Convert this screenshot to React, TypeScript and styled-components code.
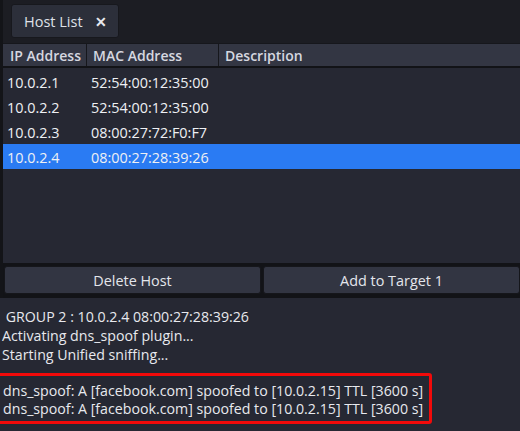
import React from "react";
import styled, { createGlobalStyle } from "styled-components";

const Global = createGlobalStyle`
  html, body { margin: 0; padding: 0; background: #262833; }
  body { font-family: "Open Sans", "Noto Sans", sans-serif; }
`;

const Window = styled.div`
  width: 520px;
  height: 431px;
  display: flex;
  flex-direction: column;
  background: #262833;
  overflow: hidden;
`;

const TabBar = styled.div`
  height: 43px;
  box-sizing: border-box;
  background: #1c1d23;
  border-left: 3px solid #131418;
  padding: 4px 0 0 8px;
  display: flex;
  align-items: flex-start;
`;

const Tab = styled.div`
  height: 34px;
  width: 108px;
  box-sizing: border-box;
  background: #2c2f3a;
  border-radius: 3px;
  border: 1px solid #17181d;
  display: flex;
  align-items: center;
  padding-left: 12px;
  gap: 12px;
  color: #dfe1e8;
  font-size: 14.5px;
`;

const Close = styled.span`
  font-size: 14px;
  font-weight: 700;
  color: #e8e9ee;
`;

const Panel = styled.div`
  height: 255px;
  display: flex;
  flex-direction: column;
  border-left: 3px solid #131418;
  background: #262833;
`;

const HeaderRow = styled.div`
  display: grid;
  grid-template-columns: 83px 132px 1fr;
  height: 25px;
  box-sizing: border-box;
  border-top: 1px solid #16171c;
  border-bottom: 2px solid #121317;
  background: #333643;
`;

const HeaderCell = styled.div<{ $first?: boolean }>`
  display: flex;
  align-items: center;
  padding-left: ${(p) => (p.$first ? "7px" : "6px")};
  border-left: ${(p) => (p.$first ? "none" : "1px solid #16171c")};
  color: #d6d8e0;
  font-size: 14px;
  font-weight: 600;
  white-space: nowrap;
  overflow: hidden;
`;

const Body = styled.div`
  padding-top: 1px;
`;

const Row = styled.div<{ $selected?: boolean }>`
  display: grid;
  grid-template-columns: 83px 132px 1fr;
  height: 25px;
  align-items: center;
  background: ${(p) => (p.$selected ? "#2a7bf3" : "transparent")};
  color: #eef0f4;
  font-size: 14.4px;
`;

const Cell = styled.div<{ $first?: boolean }>`
  padding-left: ${(p) => (p.$first ? "4px" : "5px")};
  padding-top: 1px;
  white-space: nowrap;
`;

const Spacer = styled.div`
  flex: 1;
`;

const ButtonRow = styled.div`
  display: flex;
  gap: 2px;
  padding: 2px 0 4px 1px;
  border-top: 1px solid #121317;
  background: #121317;
`;

const Button = styled.div`
  flex: 1;
  height: 28px;
  box-sizing: border-box;
  background: #323542;
  border: 1px solid #15161b;
  border-radius: 3px;
  display: flex;
  align-items: center;
  justify-content: center;
  color: #e4e6ec;
  font-size: 14.4px;
`;

const Log = styled.div`
  flex: 1;
  padding: 9px 0 0 2px;
  color: #e8e9ee;
  font-size: 14.2px;
  line-height: 19px;
  background: #262833;
`;

const LogLine = styled.div`
  white-space: nowrap;
`;

const Highlight = styled.div`
  margin: 9px 0 0 -6px;
  width: 436px;
  box-sizing: border-box;
  border: 3px solid #f20a0a;
  border-radius: 3px;
  padding: 6px 0 3px 4px;
  line-height: 18px;
`;

const hosts = [
  ["10.0.2.1", "52:54:00:12:35:00"],
  ["10.0.2.2", "52:54:00:12:35:00"],
  ["10.0.2.3", "08:00:27:72:F0:F7"],
  ["10.0.2.4", "08:00:27:28:39:26"],
];

export default function App() {
  return (
    <Window>
      <Global />
      <TabBar>
        <Tab>
          Host List <Close>✕</Close>
        </Tab>
      </TabBar>
      <Panel>
        <HeaderRow>
          <HeaderCell $first>IP Address</HeaderCell>
          <HeaderCell>MAC Address</HeaderCell>
          <HeaderCell>Description</HeaderCell>
        </HeaderRow>
        <Body>
          {hosts.map(([ip, mac], i) => (
            <Row key={ip} $selected={i === 3}>
              <Cell $first>{ip}</Cell>
              <Cell>{mac}</Cell>
              <Cell />
            </Row>
          ))}
        </Body>
        <Spacer />
        <ButtonRow>
          <Button>Delete Host</Button>
          <Button>Add to Target 1</Button>
        </ButtonRow>
      </Panel>
      <Log>
        <LogLine>&nbsp;GROUP 2 : 10.0.2.4 08:00:27:28:39:26</LogLine>
        <LogLine>Activating dns_spoof plugin...</LogLine>
        <LogLine>Starting Unified sniffing...</LogLine>
        <Highlight>
          <LogLine>dns_spoof: A [facebook.com] spoofed to [10.0.2.15] TTL [3600 s]</LogLine>
          <LogLine>dns_spoof: A [facebook.com] spoofed to [10.0.2.15] TTL [3600 s]</LogLine>
        </Highlight>
      </Log>
    </Window>
  );
}
